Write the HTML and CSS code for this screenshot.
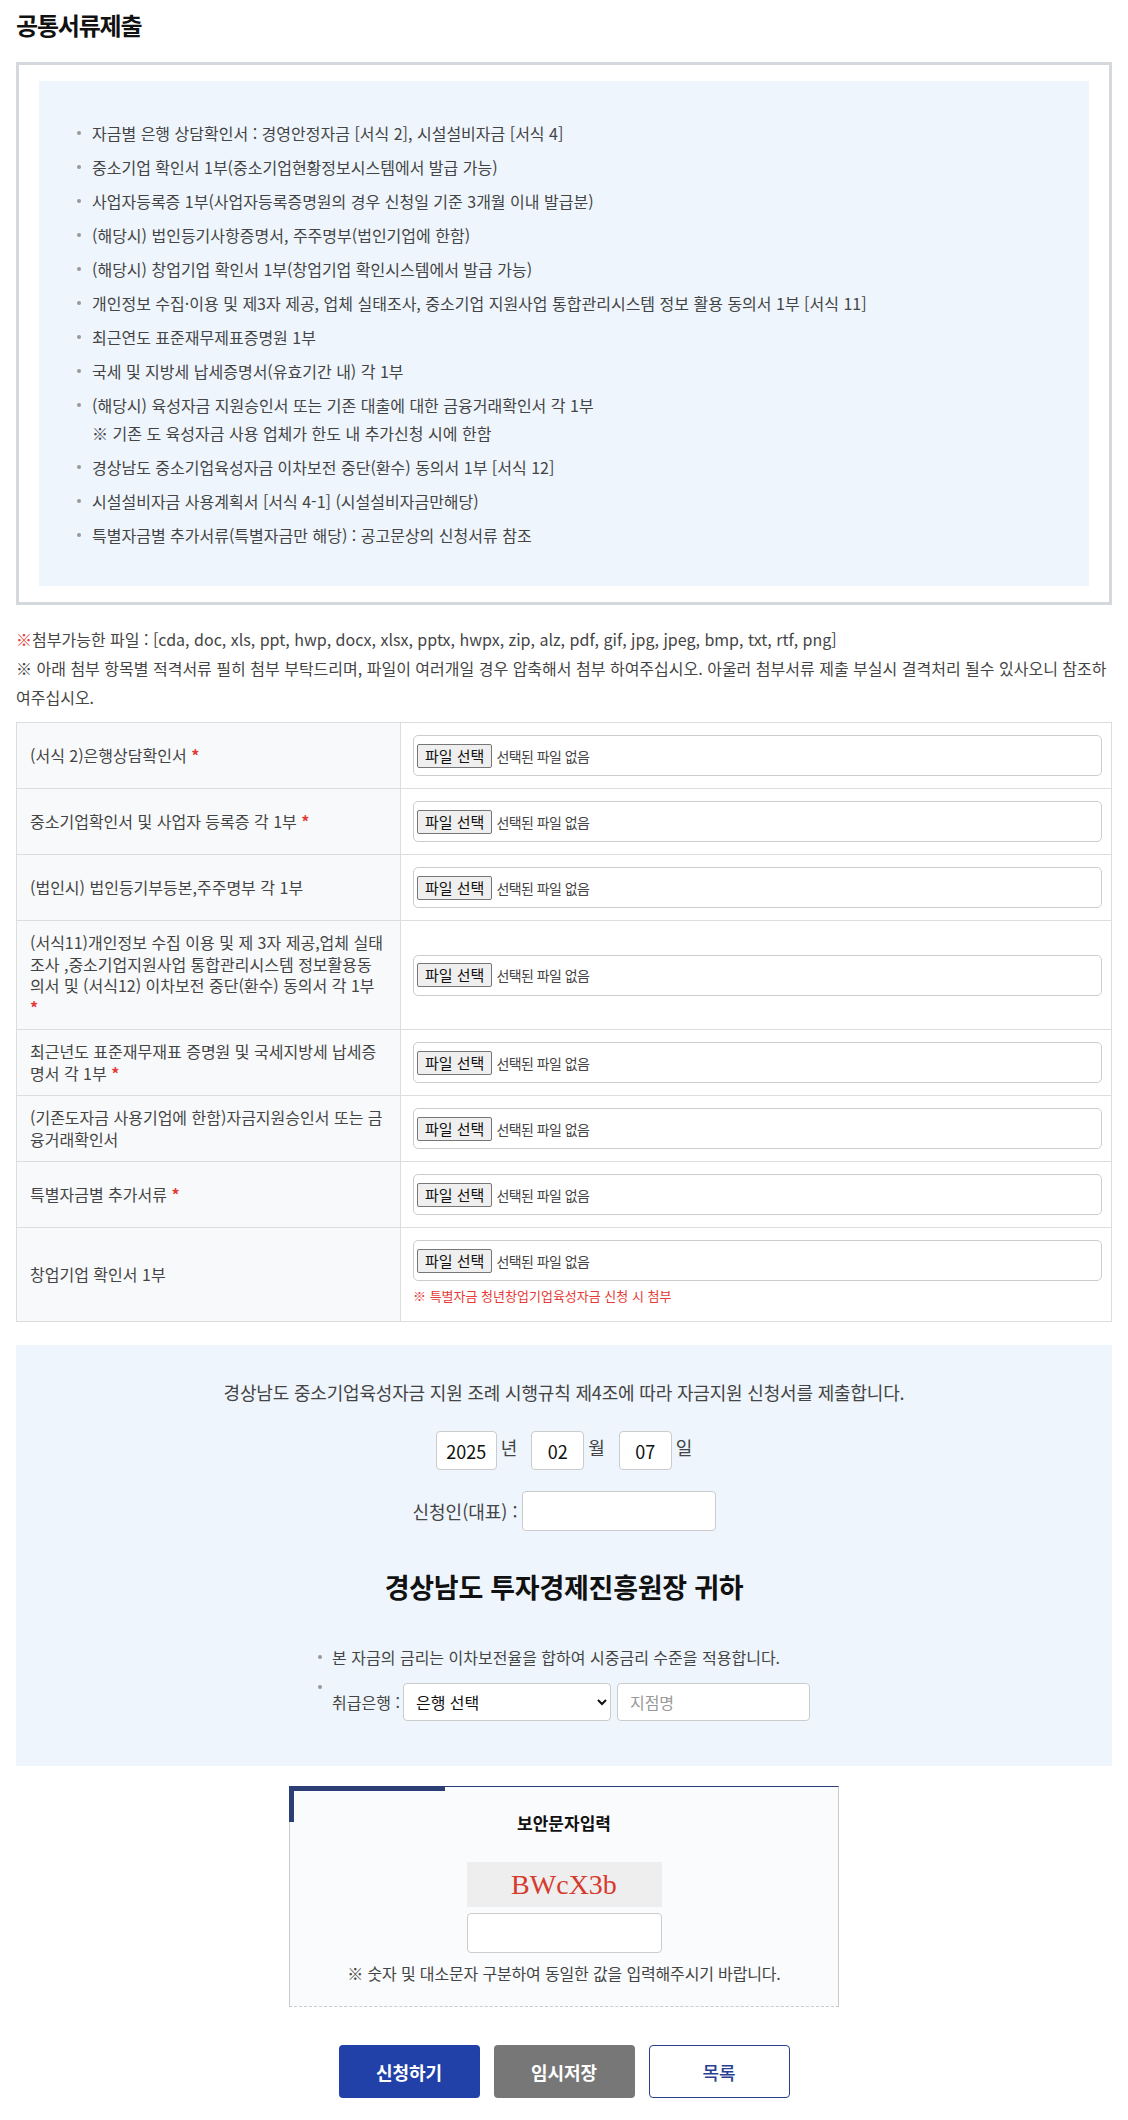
FILE: index.html
```html
<!DOCTYPE html>
<html lang="ko">
<head>
    <meta charset="utf-8">
    <title>공통서류제출</title>
    <link rel="stylesheet" href="styles.css">
</head>
<body>

    <div class="container">
        <h2 class="page-title">공통서류제출</h2>

        <div class="doc-box">
            <ul class="doc-list">
                <li>자금별 은행 상담확인서 : 경영안정자금 [서식 2], 시설설비자금 [서식 4]</li>
                <li>중소기업 확인서 1부(중소기업현황정보시스템에서 발급 가능)</li>
                <li>사업자등록증 1부(사업자등록증명원의 경우 신청일 기준 3개월 이내 발급분)</li>
                <li>(해당시) 법인등기사항증명서, 주주명부(법인기업에 한함)</li>
                <li>(해당시) 창업기업 확인서 1부(창업기업 확인시스템에서 발급 가능)</li>
                <li>개인정보 수집·이용 및 제3자 제공, 업체 실태조사, 중소기업 지원사업 통합관리시스템 정보 활용 동의서 1부 [서식 11]</li>
                <li>최근연도 표준재무제표증명원 1부</li>
                <li>국세 및 지방세 납세증명서(유효기간 내) 각 1부</li>
                <li>(해당시) 육성자금 지원승인서 또는 기존 대출에 대한 금융거래확인서 각 1부<br>※ 기존 도 육성자금 사용 업체가 한도 내 추가신청 시에 한함</li>
                <li>경상남도 중소기업육성자금 이차보전 중단(환수) 동의서 1부 [서식 12]</li>
                <li>시설설비자금 사용계획서 [서식 4-1] (시설설비자금만해당)</li>
                <li>특별자금별 추가서류(특별자금만 해당) : 공고문상의 신청서류 참조</li>
            </ul>
        </div>

        <p class="notice"><span class="mark">※</span>첨부가능한 파일 : [cda, doc, xls, ppt, hwp, docx, xlsx, pptx, hwpx, zip, alz, pdf, gif, jpg, jpeg, bmp, txt, rtf, png]<br>※ 아래 첨부 항목별 적격서류 필히 첨부 부탁드리며, 파일이 여러개일 경우 압축해서 첨부 하여주십시오. 아울러 첨부서류 제출 부실시 결격처리 될수 있사오니 참조하여주십시오.</p>

        <div class="file-table">
            <div class="file-row">
                <div class="file-label"><span>(서식 2)은행상담확인서 <span class="req">*</span></span></div>
                <div class="file-field">
                    <label class="file-box"><input type="file" class="file-input"><span class="file-btn">파일 선택</span><span class="file-name">선택된 파일 없음</span></label>
                </div>
            </div>
            <div class="file-row">
                <div class="file-label"><span>중소기업확인서 및 사업자 등록증 각 1부 <span class="req">*</span></span></div>
                <div class="file-field">
                    <label class="file-box"><input type="file" class="file-input"><span class="file-btn">파일 선택</span><span class="file-name">선택된 파일 없음</span></label>
                </div>
            </div>
            <div class="file-row">
                <div class="file-label"><span>(법인시) 법인등기부등본,주주명부 각 1부</span></div>
                <div class="file-field">
                    <label class="file-box"><input type="file" class="file-input"><span class="file-btn">파일 선택</span><span class="file-name">선택된 파일 없음</span></label>
                </div>
            </div>
            <div class="file-row">
                <div class="file-label"><span>(서식11)개인정보 수집 이용 및 제 3자 제공,업체 실태조사 ,중소기업지원사업 통합관리시스템 정보활용동의서 및 (서식12) 이차보전 중단(환수) 동의서 각 1부<br><span class="req">*</span></span></div>
                <div class="file-field">
                    <label class="file-box"><input type="file" class="file-input"><span class="file-btn">파일 선택</span><span class="file-name">선택된 파일 없음</span></label>
                </div>
            </div>
            <div class="file-row">
                <div class="file-label"><span>최근년도 표준재무재표 증명원 및 국세지방세 납세증명서 각 1부 <span class="req">*</span></span></div>
                <div class="file-field">
                    <label class="file-box"><input type="file" class="file-input"><span class="file-btn">파일 선택</span><span class="file-name">선택된 파일 없음</span></label>
                </div>
            </div>
            <div class="file-row">
                <div class="file-label"><span>(기존도자금 사용기업에 한함)자금지원승인서 또는 금융거래확인서</span></div>
                <div class="file-field">
                    <label class="file-box"><input type="file" class="file-input"><span class="file-btn">파일 선택</span><span class="file-name">선택된 파일 없음</span></label>
                </div>
            </div>
            <div class="file-row">
                <div class="file-label"><span>특별자금별 추가서류 <span class="req">*</span></span></div>
                <div class="file-field">
                    <label class="file-box"><input type="file" class="file-input"><span class="file-btn">파일 선택</span><span class="file-name">선택된 파일 없음</span></label>
                </div>
            </div>
            <div class="file-row">
                <div class="file-label"><span>창업기업 확인서 1부</span></div>
                <div class="file-field last">
                    <label class="file-box"><input type="file" class="file-input"><span class="file-btn">파일 선택</span><span class="file-name">선택된 파일 없음</span></label>
                    <p class="file-note">※ 특별자금 청년창업기업육성자금 신청 시 첨부</p>
                </div>
            </div>
        </div>

        <div class="apply-panel">
            <p class="apply-text">경상남도 중소기업육성자금 지원 조례 시행규칙 제4조에 따라 자금지원 신청서를 제출합니다.</p>

            <div class="date-row">
                <input type="text" class="date-input year" value="2025"><span class="unit">년</span>
                <input type="text" class="date-input" value="02"><span class="unit">월</span>
                <input type="text" class="date-input" value="07"><span class="unit">일</span>
            </div>

            <div class="applicant-row">
                <label for="applicant">신청인(대표) :</label>
                <input type="text" id="applicant" class="text-input applicant">
            </div>

            <h3 class="receiver">경상남도 투자경제진흥원장 귀하</h3>

            <ul class="apply-list">
                <li>본 자금의 금리는 이차보전율을 합하여 시중금리 수준을 적용합니다.</li>
                <li class="bank-item">
                    <span>취급은행 :</span>
                    <select class="bank-select">
                        <option>은행 선택</option>
                    </select>
                    <input type="text" class="text-input branch" placeholder="지점명">
                </li>
            </ul>
        </div>

        <div class="captcha-box">
            <h4 class="captcha-title">보안문자입력</h4>
            <div class="captcha-img">BWcX3b</div>
            <input type="text" class="text-input captcha-input">
            <p class="captcha-note">※ 숫자 및 대소문자 구분하여 동일한 값을 입력해주시기 바랍니다.</p>
        </div>

        <div class="btn-row">
            <button class="btn btn-primary">신청하기</button>
            <button class="btn btn-gray">임시저장</button>
            <button class="btn btn-line">목록</button>
        </div>
    </div>

</body>
</html>
```

FILE: styles.css
```css
* {
    box-sizing: border-box;
}

body {
    margin: 0;
    font-family: "Noto Sans CJK KR", "Noto Sans", sans-serif;
    color: #444;
    background-color: #fff;
}

input, select, button {
    font-family: inherit;
}

.container {
    padding: 11px 16px 22px;
}

.page-title {
    margin: 0 0 23px;
    font-size: 24px;
    line-height: 28px;
    font-weight: 700;
    letter-spacing: -0.05em;
    color: #111;
}

/* 제출서류 안내 */
.doc-box {
    border: 3px solid #d5d9de;
    padding: 16px 20px;
}

.doc-list {
    margin: 0;
    padding: 38px 20px 37px 38px;
    list-style: none;
    background-color: #eef5fc;
    font-size: 16px;
    line-height: 28px;
}

.doc-list li {
    position: relative;
    padding-left: 15px;
    margin-bottom: 6px;
}

.doc-list li:last-child {
    margin-bottom: 0;
}

.doc-list li::before {
    content: "";
    position: absolute;
    left: 0;
    top: 12px;
    width: 4px;
    height: 4px;
    border-radius: 50%;
    background-color: #999;
}

.notice {
    margin: 20px 0 10px;
    font-size: 16px;
    line-height: 29px;
}

.notice .mark {
    color: #e53a35;
}

/* 첨부파일 표 */
.file-table {
    border: 1px solid #ddd;
    border-bottom: none;
}

.file-row {
    display: grid;
    grid-template-columns: 384px 1fr;
    border-bottom: 1px solid #ddd;
}

.file-label {
    display: flex;
    align-items: center;
    padding: 11px 16px 11px 13px;
    background-color: #f8f9fb;
    border-right: 1px solid #ddd;
    font-size: 16px;
    line-height: 21.5px;
}

.req {
    color: #e53a35;
    font-weight: 700;
}

.file-field {
    display: flex;
    flex-direction: column;
    justify-content: center;
    padding: 12px 9px 12px 12px;
}

.file-field.last {
    padding-bottom: 15px;
}

.file-box {
    display: flex;
    align-items: center;
    height: 41px;
    padding: 0 3px;
    border: 1px solid #ccc;
    border-radius: 5px;
    background-color: #fff;
    cursor: pointer;
}

.file-input {
    display: none;
}

.file-btn {
    height: 24px;
    padding: 0 7px;
    border: 1px solid #767676;
    border-radius: 2px;
    background-color: #efefef;
    color: #111;
    font-size: 15px;
    line-height: 22px;
}

.file-name {
    margin-left: 4px;
    font-size: 14px;
    letter-spacing: -0.04em;
    color: #444;
}

.file-note {
    margin: 5px 0 0;
    font-size: 13px;
    line-height: 20px;
    color: #e53a35;
}

/* 신청 영역 */
.apply-panel {
    margin-top: 23px;
    padding: 33px 20px 45px;
    background-color: #eef5fc;
    text-align: center;
}

.apply-text {
    margin: 0;
    font-size: 18px;
    line-height: 28px;
    letter-spacing: -0.01em;
}

.date-row {
    display: flex;
    justify-content: center;
    align-items: center;
    margin-top: 25px;
    font-size: 18px;
}

.date-input {
    width: 53px;
    height: 39px;
    border: 1px solid #ccc;
    border-radius: 4px;
    background-color: #fff;
    text-align: center;
    font-size: 18px;
    color: #111;
}

.date-input.year {
    width: 61px;
}

.unit {
    margin: 0 14px 8px 4px;
}

.unit:last-child {
    margin-right: 0;
}

.applicant-row {
    display: flex;
    justify-content: center;
    align-items: center;
    gap: 4px;
    margin-top: 21px;
    font-size: 18px;
}

.text-input {
    height: 40px;
    padding: 0 12px;
    border: 1px solid #ccc;
    border-radius: 4px;
    background-color: #fff;
    font-size: 16px;
    color: #111;
}

.text-input::placeholder {
    color: #999;
}

.applicant {
    width: 194px;
}

.receiver {
    margin: 36px 0 0;
    font-size: 27px;
    line-height: 40px;
    font-weight: 700;
    letter-spacing: -0.01em;
    color: #111;
}

.apply-list {
    display: table;
    margin: 36px auto 0;
    padding: 0;
    list-style: none;
    text-align: left;
    font-size: 16px;
    line-height: 28px;
}

.apply-list li {
    position: relative;
    padding-left: 14px;
}

.apply-list li::before {
    content: "";
    position: absolute;
    left: 0;
    top: 12px;
    width: 4px;
    height: 4px;
    border-radius: 50%;
    background-color: #999;
}

.apply-list .bank-item {
    display: flex;
    align-items: center;
    margin-top: 12px;
}

.apply-list .bank-item::before {
    top: 2px;
}

.bank-select {
    width: 208px;
    height: 38px;
    margin-left: 3px;
    padding: 0 8px;
    border: 1px solid #ccc;
    border-radius: 4px;
    background-color: #fff;
    font-size: 16px;
    color: #111;
}

.branch {
    width: 193px;
    height: 38px;
    margin-left: 6px;
}

/* 보안문자 */
.captcha-box {
    position: relative;
    width: 550px;
    margin: 20px auto 0;
    padding: 23px 20px 21px;
    border: 1px solid #ccc;
    border-top: 1px solid #2b3f75;
    border-bottom: 1px dashed #ccc;
    background-color: #fafbfc;
    text-align: center;
}

.captcha-box::before {
    content: "";
    position: absolute;
    left: -1px;
    top: -1px;
    width: 156px;
    height: 5px;
    background-color: #2b3f75;
}

.captcha-box::after {
    content: "";
    position: absolute;
    left: -1px;
    top: -1px;
    width: 5px;
    height: 36px;
    background-color: #2b3f75;
}

.captcha-title {
    margin: 0;
    font-size: 17px;
    line-height: 26px;
    font-weight: 700;
    color: #111;
}

.captcha-img {
    width: 195px;
    height: 45px;
    margin: 26px auto 0;
    background-color: #eee;
    font-family: "Liberation Serif", serif;
    font-size: 28px;
    line-height: 45px;
    color: #d63a2c;
}

.captcha-input {
    display: block;
    width: 195px;
    margin: 6px auto 0;
}

.captcha-note {
    margin: 8px 0 0;
    font-size: 16px;
    line-height: 24px;
    letter-spacing: -0.01em;
}

/* 버튼 */
.btn-row {
    display: flex;
    justify-content: center;
    gap: 14px;
    margin-top: 38px;
}

.btn {
    width: 141px;
    height: 53px;
    border: 1px solid transparent;
    border-radius: 4px;
    font-size: 18px;
    font-weight: 700;
    cursor: pointer;
}

.btn-primary {
    background-color: #2140a8;
    color: #fff;
}

.btn-gray {
    background-color: #777;
    color: #fff;
}

.btn-line {
    background-color: #fff;
    border-color: #2a3f8f;
    color: #2a3f8f;
    font-weight: 500;
}
```
